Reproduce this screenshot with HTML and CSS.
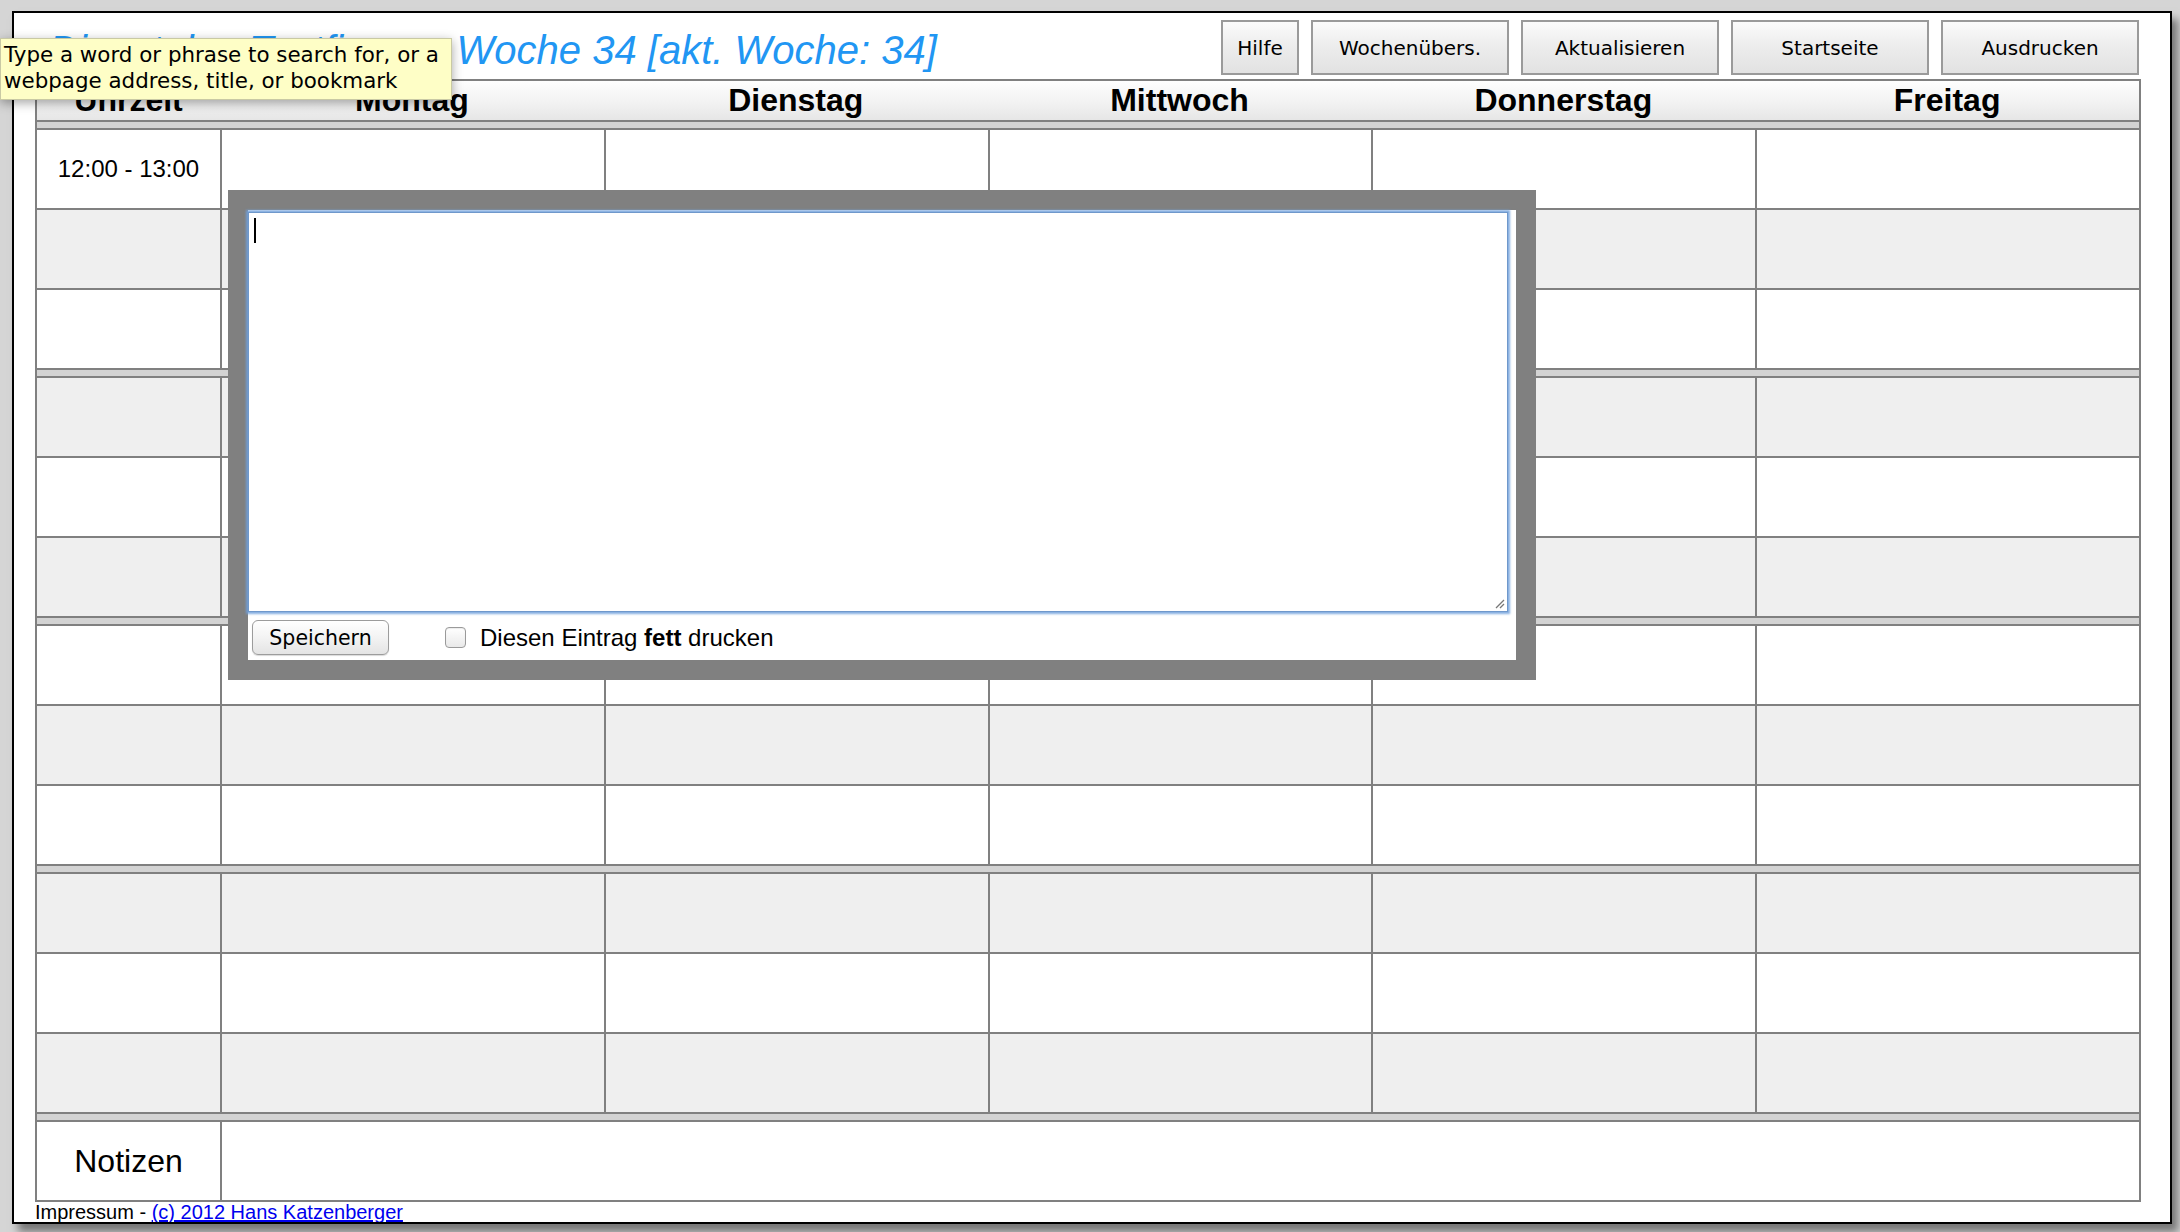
FILE: index.html
```html
<!DOCTYPE html>
<html lang="de">
<head>
<meta charset="utf-8">
<title>Dienstplan Testfirma</title>
<link rel="stylesheet" href="styles.css">
</head>
<body>
<div class="window">
  <div class="topbar">
    <h1 class="title">Dienstplan Testfirma – Woche 34 [akt. Woche: 34]</h1>
    <div class="buttons">
      <button class="btn btn-small">Hilfe</button>
      <button class="btn">Wochenübers.</button>
      <button class="btn">Aktualisieren</button>
      <button class="btn">Startseite</button>
      <button class="btn">Ausdrucken</button>
    </div>
  </div>

  <div class="plan">
    <div class="row head">
      <div class="cell">Uhrzeit</div>
      <div class="cell">Montag</div>
      <div class="cell">Dienstag</div>
      <div class="cell">Mittwoch</div>
      <div class="cell">Donnerstag</div>
      <div class="cell">Freitag</div>
    </div>
    <div class="sep"></div>
    <div class="group">
      <div class="row"><div class="cell time">12:00 - 13:00</div><div class="cell"></div><div class="cell"></div><div class="cell"></div><div class="cell"></div><div class="cell"></div></div>
      <div class="row alt"><div class="cell"></div><div class="cell"></div><div class="cell"></div><div class="cell"></div><div class="cell"></div><div class="cell"></div></div>
      <div class="row"><div class="cell"></div><div class="cell"></div><div class="cell"></div><div class="cell"></div><div class="cell"></div><div class="cell"></div></div>
    </div>
    <div class="sep"></div>
    <div class="group">
      <div class="row alt"><div class="cell"></div><div class="cell"></div><div class="cell"></div><div class="cell"></div><div class="cell"></div><div class="cell"></div></div>
      <div class="row"><div class="cell"></div><div class="cell"></div><div class="cell"></div><div class="cell"></div><div class="cell"></div><div class="cell"></div></div>
      <div class="row alt"><div class="cell"></div><div class="cell"></div><div class="cell"></div><div class="cell"></div><div class="cell"></div><div class="cell"></div></div>
    </div>
    <div class="sep"></div>
    <div class="group">
      <div class="row"><div class="cell"></div><div class="cell"></div><div class="cell"></div><div class="cell"></div><div class="cell"></div><div class="cell"></div></div>
      <div class="row alt"><div class="cell"></div><div class="cell"></div><div class="cell"></div><div class="cell"></div><div class="cell"></div><div class="cell"></div></div>
      <div class="row"><div class="cell"></div><div class="cell"></div><div class="cell"></div><div class="cell"></div><div class="cell"></div><div class="cell"></div></div>
    </div>
    <div class="sep"></div>
    <div class="group">
      <div class="row alt"><div class="cell"></div><div class="cell"></div><div class="cell"></div><div class="cell"></div><div class="cell"></div><div class="cell"></div></div>
      <div class="row"><div class="cell"></div><div class="cell"></div><div class="cell"></div><div class="cell"></div><div class="cell"></div><div class="cell"></div></div>
      <div class="row alt"><div class="cell"></div><div class="cell"></div><div class="cell"></div><div class="cell"></div><div class="cell"></div><div class="cell"></div></div>
    </div>
    <div class="sep"></div>
    <div class="row notes">
      <div class="cell notes-label">Notizen</div>
      <div class="cell notes-body"></div>
    </div>
  </div>

  <div class="footer">Impressum - <a href="#">(c) 2012 Hans Katzenberger</a></div>

  <div class="modal">
    <div class="editor">
      <span class="caret"></span>
      <svg class="grip" width="12" height="12" viewBox="0 0 12 12"><path d="M11 3 L3 11 M11 7 L7 11" stroke="#777" stroke-width="1.3" fill="none"/></svg>
    </div>
    <div class="controls">
      <button class="save">Speichern</button>
      <span class="check"></span>
      <span class="check-label">Diesen Eintrag <b>fett</b> drucken</span>
    </div>
  </div>
</div>

<div class="tooltip">Type a word or phrase to search for, or a<br>webpage address, title, or bookmark</div>
</body>
</html>
```

FILE: styles.css
```css
html, body {
  margin: 0;
  padding: 0;
}
body {
  position: relative;
  background: #d5d5d5;
  width: 2180px;
  height: 1232px;
  overflow: hidden;
  font-family: "Liberation Sans", Arial, sans-serif;
  color: #000;
}

.window {
  position: relative;
  box-sizing: border-box;
  width: 2160px;
  height: 1213px;
  margin: 11px 0 0 12px;
  padding: 7px 29px 0 21px;
  border: 2px solid #000;
  background: #fff;
  overflow: hidden;
  box-shadow: 6px 8px 8px #777;
}

/* top bar */
.topbar {
  display: flex;
  align-items: flex-start;
  height: 55px;
}
.title {
  margin: 7px 0 0 14px;
  font-family: "Liberation Sans", Arial, sans-serif;
  font-style: italic;
  font-weight: normal;
  font-size: 40px;
  line-height: 46px;
  color: #2196f3;
  white-space: nowrap;
}
.buttons {
  margin-left: auto;
  margin-right: 2px;
  display: flex;
  gap: 12px;
}
.btn {
  box-sizing: border-box;
  width: 198px;
  height: 55px;
  padding: 0;
  border: 2px solid #9a9a9a;
  border-radius: 0;
  background: linear-gradient(#fbfbfb, #ededed 45%, #e2e2e2);
  font-family: "DejaVu Sans", sans-serif;
  font-size: 20px;
  color: #000;
}
.btn-small {
  width: 78px;
}

/* plan table */
.plan {
  margin-top: 4px;
  border: 2px solid #808080;
}
.row {
  box-sizing: border-box;
  display: grid;
  grid-template-columns: 183px repeat(5, 1fr);
  height: 80px;
  border-bottom: 2px solid #808080;
  background: #fff;
}
.row.alt {
  background: #efefef;
}
.group .row:last-child {
  height: 78px;
  border-bottom: none;
}
.cell {
  box-sizing: border-box;
  display: flex;
  align-items: center;
  justify-content: center;
}
.row .cell + .cell {
  border-left: 2px solid #808080;
}
.row .cell.time {
  font-size: 24px;
}

.row.head {
  height: 39px;
  border-bottom: none;
  background: linear-gradient(#fefefe, #f1f1f1 60%, #e6e6e6);
}
.row.head .cell + .cell {
  border-left: none;
}
.row.head .cell {
  font-weight: bold;
  font-size: 32px;
  line-height: 39px;
}

.sep {
  height: 6px;
  border-top: 2px solid #808080;
  border-bottom: 2px solid #808080;
  background: #d3d3d3;
}

.row.notes {
  height: 78px;
  border-bottom: none;
}
.notes-label {
  font-size: 32px;
}
.notes-body {
  grid-column: span 5;
}

.footer {
  font-size: 20px;
  line-height: 20px;
  white-space: nowrap;
}
.footer a {
  color: #0000ee;
  text-decoration: underline;
}

/* edit dialog */
.modal {
  position: absolute;
  left: 214px;
  top: 177px;
  box-sizing: border-box;
  width: 1308px;
  height: 490px;
  border: 20px solid #808080;
  background: #fff;
}
.editor {
  position: relative;
  box-sizing: border-box;
  width: 1260px;
  height: 400px;
  margin-top: 2px;
  border: 1px solid #6f98cb;
  background: #fff;
  box-shadow: 0 0 2px 2px rgba(112, 160, 218, 0.85);
}
.caret {
  position: absolute;
  left: 5px;
  top: 5px;
  width: 2px;
  height: 25px;
  background: #000;
}
.grip {
  position: absolute;
  right: 2px;
  bottom: 2px;
}
.controls {
  display: flex;
  align-items: center;
  margin-top: 8px;
  padding-left: 4px;
}
.save {
  box-sizing: border-box;
  width: 137px;
  height: 35px;
  padding: 0;
  border: 1px solid #9c9c9c;
  border-radius: 6px;
  background: linear-gradient(#ffffff, #f3f3f3 50%, #e4e4e4);
  box-shadow: 0 1px 1px rgba(0,0,0,0.15);
  font-family: "DejaVu Sans", sans-serif;
  font-size: 20.5px;
  color: #000;
}
.check {
  box-sizing: border-box;
  width: 21px;
  height: 21px;
  margin-left: 56px;
  border: 1px solid #9a9a9a;
  border-radius: 4px;
  background: linear-gradient(#ffffff, #e9e9e9);
  box-shadow: inset 0 1px 1px rgba(0,0,0,0.08);
}
.check-label {
  margin-left: 14px;
  font-size: 24px;
}

/* browser tooltip */
.tooltip {
  position: absolute;
  left: 0;
  top: 38px;
  box-sizing: border-box;
  width: 452px;
  height: 62px;
  padding: 3px 3px 0 3px;
  background: #fefec6;
  border: 1px solid #c9c9a4;
  box-shadow: 0 3px 10px rgba(0, 0, 0, 0.35);
  font-family: "DejaVu Sans", sans-serif;
  font-size: 21.4px;
  line-height: 26px;
  color: #000;
  white-space: nowrap;
}
```
